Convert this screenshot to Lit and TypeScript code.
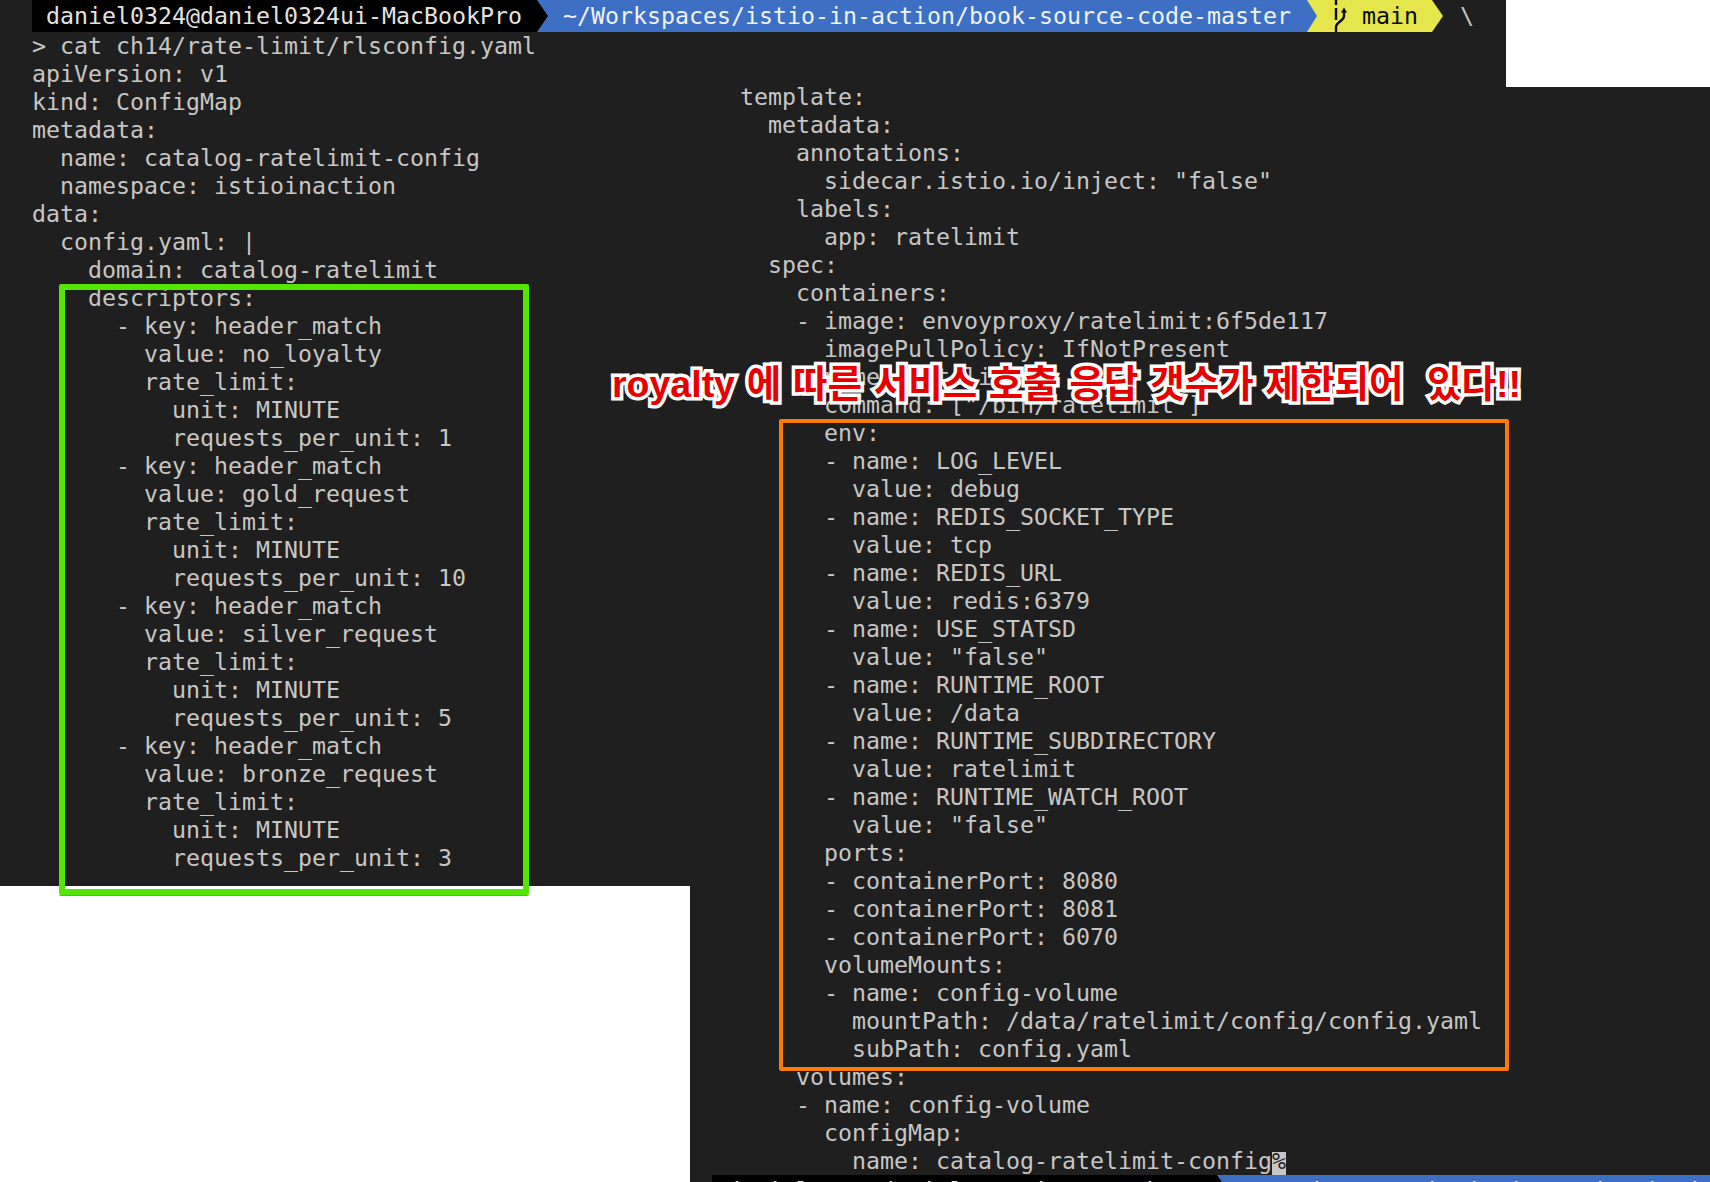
import { LitElement, html, css } from "lit";
import { customElement } from "lit/decorators.js";

const LEFT = `> cat ch14/rate-limit/rlsconfig.yaml
apiVersion: v1
kind: ConfigMap
metadata:
  name: catalog-ratelimit-config
  namespace: istioinaction
data:
  config.yaml: |
    domain: catalog-ratelimit
    descriptors:
      - key: header_match
        value: no_loyalty
        rate_limit:
          unit: MINUTE
          requests_per_unit: 1
      - key: header_match
        value: gold_request
        rate_limit:
          unit: MINUTE
          requests_per_unit: 10
      - key: header_match
        value: silver_request
        rate_limit:
          unit: MINUTE
          requests_per_unit: 5
      - key: header_match
        value: bronze_request
        rate_limit:
          unit: MINUTE
          requests_per_unit: 3`;

const RIGHT = `template:
  metadata:
    annotations:
      sidecar.istio.io/inject: "false"
    labels:
      app: ratelimit
  spec:
    containers:
    - image: envoyproxy/ratelimit:6f5de117
      imagePullPolicy: IfNotPresent
      name: ratelimit
      command: ["/bin/ratelimit"]
      env:
      - name: LOG_LEVEL
        value: debug
      - name: REDIS_SOCKET_TYPE
        value: tcp
      - name: REDIS_URL
        value: redis:6379
      - name: USE_STATSD
        value: "false"
      - name: RUNTIME_ROOT
        value: /data
      - name: RUNTIME_SUBDIRECTORY
        value: ratelimit
      - name: RUNTIME_WATCH_ROOT
        value: "false"
      ports:
      - containerPort: 8080
      - containerPort: 8081
      - containerPort: 6070
      volumeMounts:
      - name: config-volume
        mountPath: /data/ratelimit/config/config.yaml
        subPath: config.yaml
    volumes:
    - name: config-volume
      configMap:
        name: catalog-ratelimit-config`;

@customElement("app-root")
export class AppRoot extends LitElement {
  static styles = css`
    :host {
      display: block;
      width: 1710px;
      height: 1182px;
      overflow: hidden;
    }
    .screen {
      position: relative;
      width: 1710px;
      height: 1182px;
      overflow: hidden;
      background: #1f1f1f;
      display: grid;
      grid-template-columns: 690px 816px 204px;
      grid-template-rows: 32px 55px 1fr;
      font-family: "DejaVu Sans Mono", "Liberation Mono", monospace;
      font-size: 23.25px;
      line-height: 28px;
      color: #c6c6c6;
    }
    .top-prompt {
      grid-column: 1 / 3;
      grid-row: 1;
      padding-left: 32px;
    }
    .corner {
      grid-column: 3;
      grid-row: 1 / 3;
      background: #ffffff;
    }
    .left {
      grid-column: 1;
      grid-row: 2 / 4;
      display: flex;
      flex-direction: column;
    }
    .left .code {
      padding: 0 0 14px 32px;
    }
    .blank {
      flex: 1;
      background: #ffffff;
    }
    .right {
      grid-column: 2;
      grid-row: 2 / 4;
      padding-top: 51px;
    }
    .right .code {
      padding-left: 50px;
    }
    .bottom-prompt {
      margin: 0 0 0 22px;
      width: 1100px;
    }
    .line {
      height: 28px;
      white-space: pre;
    }
    .cursor {
      display: inline-block;
      height: 23px;
      line-height: 18px;
      margin-top: 5px;
      vertical-align: top;
      background: #c6c6c6;
      color: #1f1f1f;
    }
    .prompt {
      display: flex;
      height: 32px;
      white-space: pre;
      align-items: stretch;
      line-height: 32px;
    }
    .seg {
      display: flex;
      align-items: center;
      height: 32px;
      flex: none;
    }
    .user {
      width: 516px;
      padding-left: 14px;
      box-sizing: border-box;
      background: #000000;
      color: #e2e2e2;
      position: relative;
      z-index: 2;
      clip-path: polygon(0 0, 505px 0, 516px 50%, 505px 100%, 0 100%);
    }
    .path {
      width: 780px;
      margin-left: -11px;
      padding-left: 26px;
      box-sizing: border-box;
      background: #3d70c4;
      color: #f2f2f2;
      position: relative;
      z-index: 1;
      clip-path: polygon(0 0, 770px 0, 780px 50%, 770px 100%, 0 100%);
    }
    .branch {
      width: 136px;
      margin-left: -10px;
      padding-left: 25px;
      box-sizing: border-box;
      background: #e4e64b;
      color: #0a0a0a;
      gap: 13px;
      clip-path: polygon(0 0, 125px 0, 136px 50%, 125px 100%, 0 100%);
    }
    .branch svg {
      flex: none;
      display: block;
    }
    .slash {
      margin-left: 17px;
      color: #c6c6c6;
    }
    .bottom-prompt .path {
      width: 700px;
      clip-path: none;
    }
    .box {
      position: absolute;
      box-sizing: border-box;
      border-radius: 2px;
    }
    .green {
      left: 59px;
      top: 284px;
      width: 470px;
      height: 611px;
      border: 6px solid #52e600;
      box-shadow: 0 1px 0 rgba(0, 0, 0, 0.45);
    }
    .orange {
      left: 779px;
      top: 419px;
      width: 730px;
      height: 652px;
      border: 4px solid #ff7a00;
    }
    .caption {
      position: absolute;
      left: 612px;
      top: 362px;
      white-space: pre;
      font-family: "Liberation Sans", "Noto Sans CJK KR", sans-serif;
      font-weight: 700;
      font-size: 37.5px;
      line-height: 44px;
      word-spacing: 1.3px;
      color: #e60000;
      -webkit-text-stroke: 7px #ffffff;
      paint-order: stroke fill;
      stroke-linejoin: round;
    }
  `;

  private prompt() {
    return html`
      <div class="seg user">daniel0324@daniel0324ui-MacBookPro</div>
      <div class="seg path">~/Workspaces/istio-in-action/book-source-code-master</div>
    `;
  }

  render() {
    const rightLines = RIGHT.split("\n");
    const last = rightLines.length - 1;
    return html`
      <div class="screen">
        <div class="prompt top-prompt">
          ${this.prompt()}
          <div class="seg branch">
            <svg width="17" height="32" viewBox="0 0 17 32" fill="none" stroke="#0a0a0a" stroke-width="2.4">
              <path d="M4 0V5M4 8V20" />
              <path d="M12 10V16C12 21 4 22 4 27V32" />
              <path d="M9 12.5L12 7.5L15 12.5Z" fill="#0a0a0a" stroke="none" />
            </svg>
            <span>main</span>
          </div>
          <div class="seg slash">\\</div>
        </div>
        <div class="corner"></div>
        <div class="left">
          <div class="code">${LEFT.split("\n").map((l) => html`<div class="line">${l}</div>`)}</div>
          <div class="blank"></div>
        </div>
        <div class="right">
          <div class="code">${rightLines.map(
            (l, i) => html`<div class="line">${l}${i === last ? html`<span class="cursor">%</span>` : ""}</div>`
          )}</div>
          <div class="prompt bottom-prompt">${this.prompt()}</div>
        </div>
        <div class="box green"></div>
        <div class="box orange"></div>
        <div class="caption">royalty 에 따른 서비스 호출 응답 갯수가 제한되어  있다!!</div>
      </div>
    `;
  }
}
